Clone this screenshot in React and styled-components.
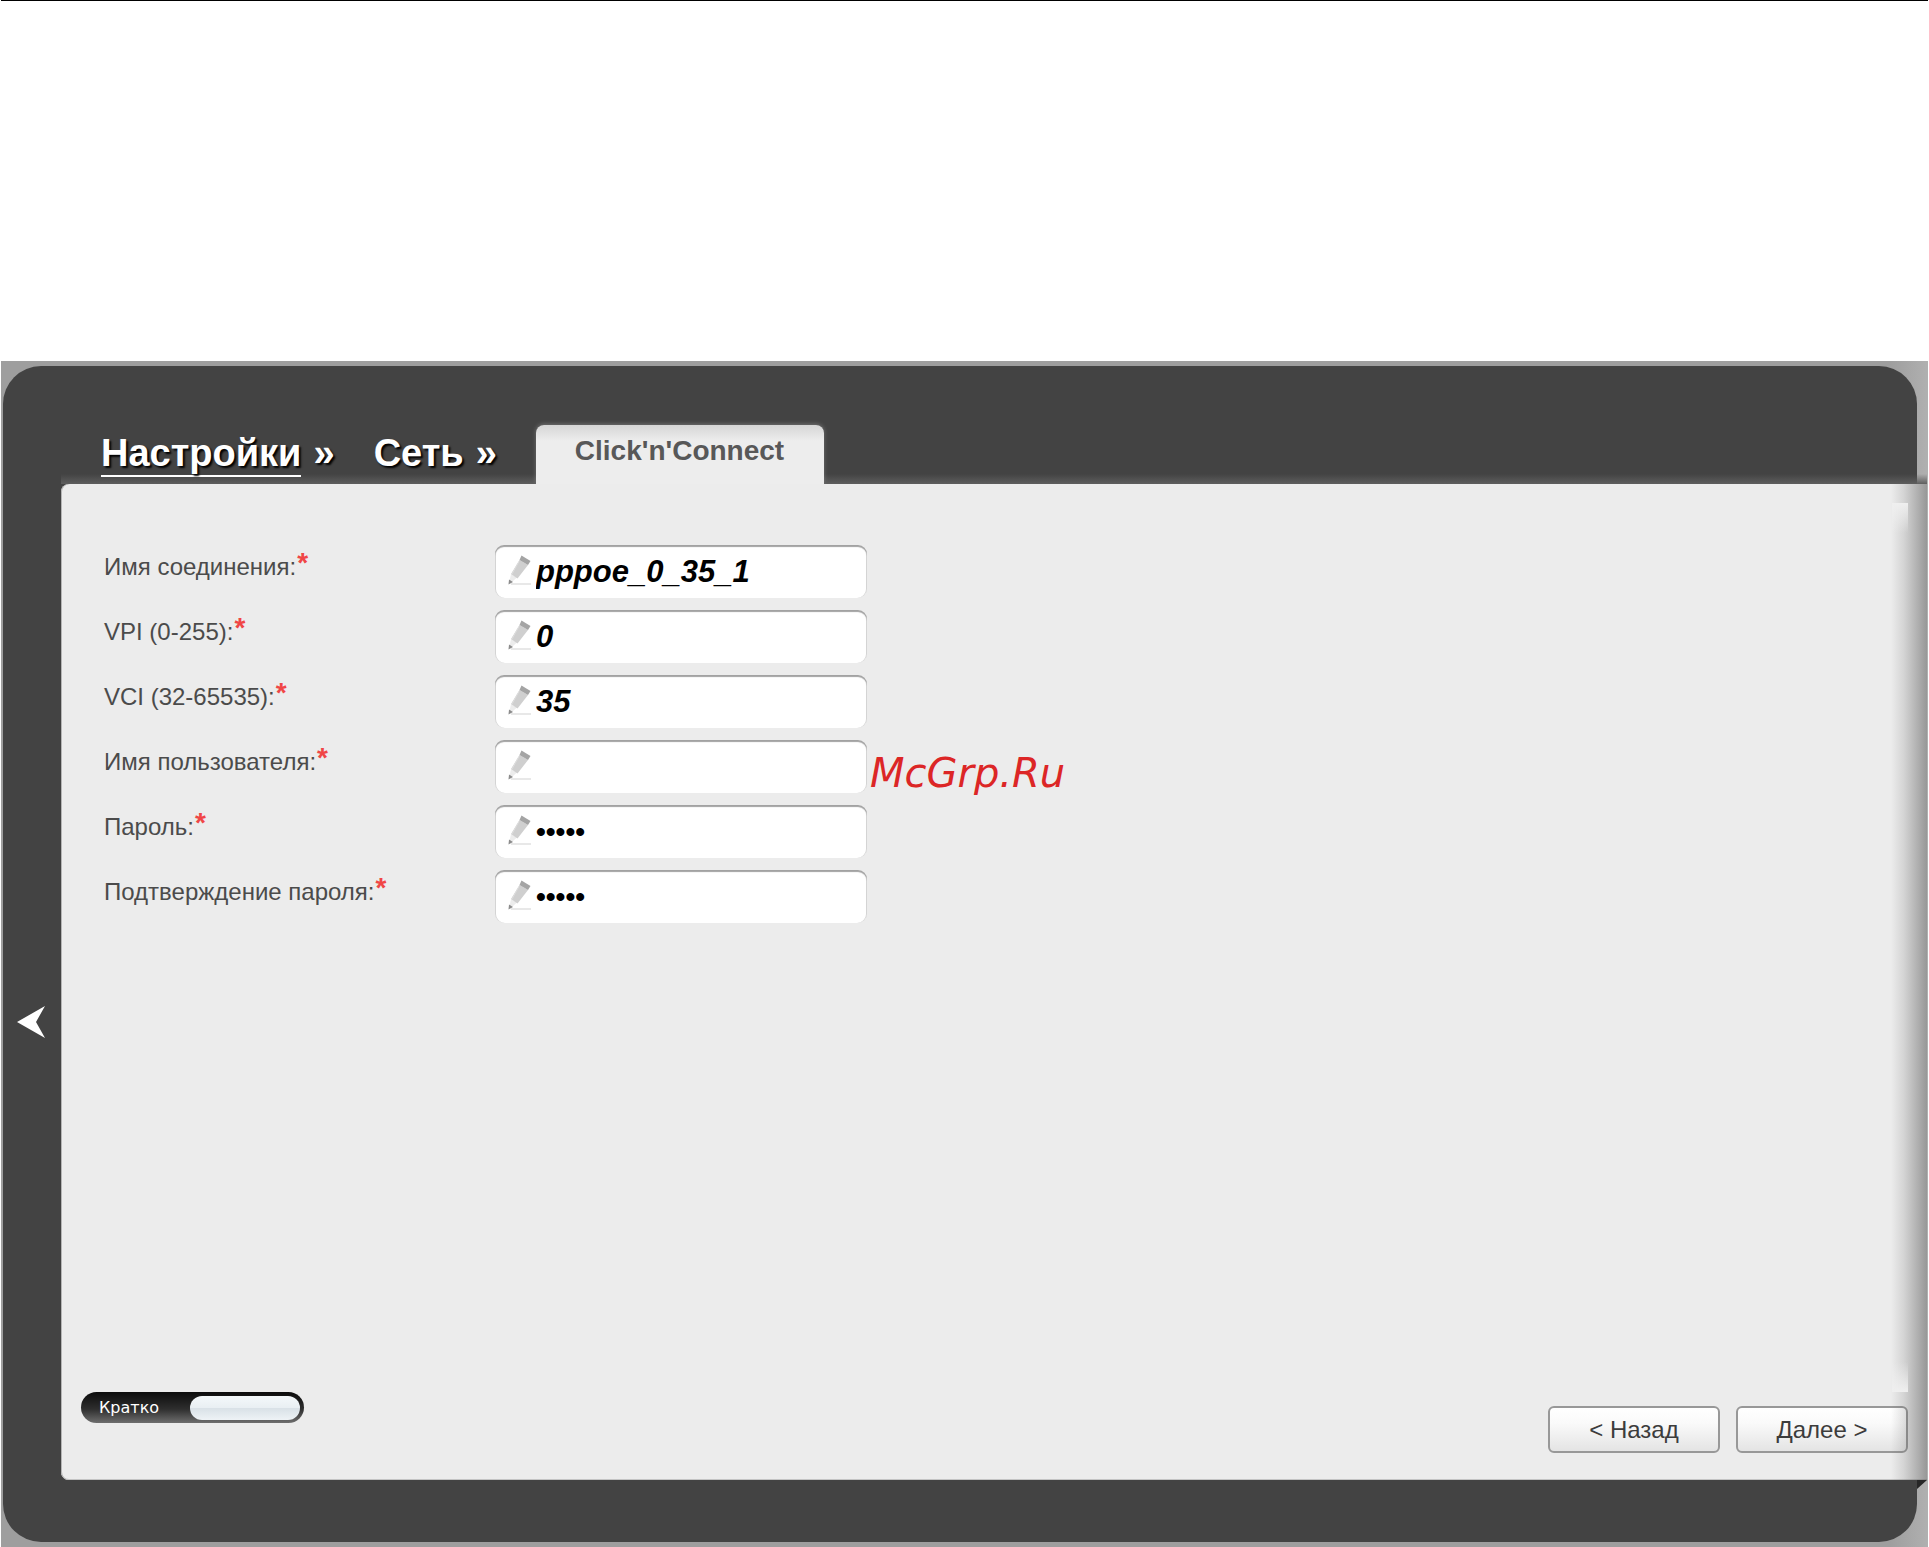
import React, { useState } from 'react';
import styled, { createGlobalStyle } from 'styled-components';

const color = {
  dark: '#434343',
  panel: '#ececec',
  frame: '#9e9e9e',
  text: '#4b4b4b',
  required: '#f04646',
  brand: '#dc2626',
};

const sans = "'Liberation Sans', Arial, sans-serif";

const GlobalStyle = createGlobalStyle`
  *, *::before, *::after {
    box-sizing: border-box;
  }

  body {
    margin: 0;
    background: #fff;
    font-family: ${sans};
  }
`;

const Page = styled.div`
  min-height: 100vh;
  display: flex;
  flex-direction: column;
  padding: 0 1px;
`;

const Rule = styled.hr`
  width: 100%;
  height: 1px;
  margin: 0 0 360px;
  border: 0;
  background: #000;
`;

const Frame = styled.div`
  flex: 1;
  display: flex;
  padding: 5px 11px 5px 2px;
  overflow: hidden;
  background: linear-gradient(to right, ${color.frame} 98%, #b0b0b0);
`;

const Shell = styled.div`
  flex: 1;
  display: flex;
  flex-direction: column;
  padding-bottom: 62px;
  border-radius: 38px;
  background: ${color.dark};
`;

const Header = styled.header`
  display: flex;
  align-items: flex-end;
  height: 118px;
  margin: 0 -10px 0 58px;
  padding-left: 40px;
  background: linear-gradient(to top, #5e5e5e, rgba(94, 94, 94, 0) 10px);
`;

const Crumbs = styled.nav`
  display: flex;
  gap: 39px;
  margin-bottom: 7px;
`;

const Crumb = styled.span`
  display: flex;
  gap: 12px;
  font-size: 38px;
  font-weight: bold;
  line-height: 44px;
  color: #fff;
  text-shadow: 2px 2px 2px #000;

  a {
    color: inherit;
    text-decoration: none;
    border-bottom: 2px solid ${(p) => (p.$underlined ? '#fff' : 'transparent')};
  }
`;

const Tab = styled.h1`
  margin: 0 0 0 39px;
  height: 59px;
  padding: 0 40px 0 39px;
  font-size: 28px;
  line-height: 52px;
  color: #585858;
  border-radius: 8px 8px 0 0;
  background: linear-gradient(#d6d6d6, #ededed 16px);
  box-shadow: 0 -1px 4px rgba(255, 255, 255, 0.25);
`;

const Body = styled.div`
  flex: 1;
  display: flex;
  margin-right: -10px;
`;

const Side = styled.aside`
  width: 58px;
  display: flex;
  align-items: center;
  padding: 80px 0 0 14px;
`;

const Collapse = styled.button`
  display: flex;
  padding: 0;
  border: 0;
  background: none;
  cursor: pointer;
`;

const Panel = styled.main`
  position: relative;
  flex: 1;
  display: flex;
  flex-direction: column;
  padding-top: 19px;
  border-radius: 8px 0 0 8px;
  background: ${color.panel};
  box-shadow: inset 1px 0 0 #b5b5b5, inset 0 -1px 0 #c4c4c4;

  /* shade on the right edge */
  &::before {
    content: '';
    position: absolute;
    z-index: 1;
    inset: 0 0 0 auto;
    width: 36px;
    pointer-events: none;
    background: linear-gradient(
      to right,
      rgba(90, 90, 90, 0),
      rgba(90, 90, 90, 0.16) 35%,
      rgba(90, 90, 90, 0.58)
    );
  }

  /* folded corner under the edge */
  &::after {
    content: '';
    position: absolute;
    top: 100%;
    right: 0;
    width: 10px;
    height: 9px;
    background: #262626;
    clip-path: polygon(0 0, 100% 0, 0 100%);
  }
`;

const Scroller = styled.div`
  position: relative;
  flex: 1;
  margin-right: 19px;
  padding: 42px 0 0 42px;

  &::before,
  &::after {
    content: '';
    position: absolute;
    z-index: 2;
    right: 0;
    width: 16px;
    height: 30px;
  }

  &::before {
    top: 0;
    background: linear-gradient(#efefef, rgba(239, 239, 239, 0));
  }

  &::after {
    bottom: 0;
    background: linear-gradient(rgba(239, 239, 239, 0), #efefef);
  }
`;

const Form = styled.form`
  display: flex;
  flex-direction: column;
  gap: 12px;
`;

const Row = styled.div`
  display: grid;
  grid-template-columns: 392px 372px;
  align-items: start;
`;

const Label = styled.label`
  display: flex;
  gap: 1px;
  padding-left: 1px;
  font-size: 24px;
  line-height: 44px;
  color: ${color.text};
`;

const Star = styled.span`
  font-size: 28px;
  font-weight: bold;
  line-height: 36px;
  color: ${color.required};
`;

const Field = styled.div`
  position: relative;
  display: flex;
  align-items: flex-start;
  height: 53px;
  padding: 10px 12px 0 13px;
  border-radius: 9px;
  background: #fff;
  box-shadow: inset 0 2px 1px #a2a2a2, inset 1px 0 0 #dadada,
    inset -1px 0 0 #dadada;
`;

const Input = styled.input`
  flex: 1;
  min-width: 0;
  height: 34px;
  margin-left: 4px;
  padding: 0;
  border: 0;
  outline: 0;
  background: none;
  font-family: ${sans};
  font-size: ${(p) => (p.type === 'password' ? 28 : 31)}px;
  font-weight: bold;
  font-style: ${(p) => (p.type === 'password' ? 'normal' : 'italic')};
  color: #000;
`;

const Brand = styled.span`
  position: absolute;
  top: 11px;
  left: 100%;
  margin-left: 3px;
  font: italic 40px/44px 'DejaVu Sans', sans-serif;
  color: ${color.brand};
`;

const Footer = styled.footer`
  display: flex;
  justify-content: space-between;
  align-items: flex-start;
  padding: 0 19px 27px 20px;
`;

const Switch = styled.button`
  display: flex;
  align-items: center;
  justify-content: space-between;
  width: 223px;
  height: 31px;
  padding: 0 4px 0 18px;
  border: 0;
  border-radius: 16px;
  background: linear-gradient(#0c0c0c, #2e2e2e 55%, #6e6e6e);
  font: 16px 'DejaVu Sans', sans-serif;
  color: #fff;
  cursor: pointer;
`;

const Knob = styled.span`
  width: 110px;
  height: 24px;
  border-radius: 12px;
  background: linear-gradient(#f4f8fa, #e9eff3 48%, #d9e1e7 52%, #eef3f6);
`;

const Actions = styled.div`
  display: flex;
  gap: 16px;
  padding-top: 14px;
`;

const Button = styled.button`
  width: 172px;
  height: 47px;
  padding: 0;
  border: 2px solid #989898;
  border-radius: 6px;
  background: linear-gradient(#fff, #fafafa 35%, #e4e4e4);
  font: 24px ${sans};
  color: #3c3c3c;
  cursor: pointer;
`;

const fields = [
  { id: 'name', label: 'Имя соединения:', value: 'pppoe_0_35_1' },
  { id: 'vpi', label: 'VPI (0-255):', value: '0' },
  { id: 'vci', label: 'VCI (32-65535):', value: '35' },
  { id: 'user', label: 'Имя пользователя:', value: '', brand: 'McGrp.Ru' },
  { id: 'password', label: 'Пароль:', value: '12345', type: 'password' },
  {
    id: 'confirm',
    label: 'Подтверждение пароля:',
    value: '12345',
    type: 'password',
  },
];

function Pencil() {
  return (
    <svg width='24' height='31' viewBox='0 0 24 31' aria-hidden='true'>
      <path d='M3 29h20' stroke='#e8e8e8' strokeWidth='2' />
      <path d='M3 19 9 22.500 5 26 1 29z' fill='#ececec' />
      <path d='M11.500 5 20 10 9.500 23.500 3 19z' fill='#cfcfcf' />
      <path d='M11 6.500 4 19' stroke='#dedede' strokeWidth='1' />
      <path d='M13.500 .5 22.500 6 20 10 11.500 5z' fill='#a4a4a4' />
      <path d='M1 24.500 5 27 .5 29.500z' fill='#8c8c8c' />
    </svg>
  );
}

function FieldRow({ id, label, value, type = 'text', brand }) {
  return (
    <Row>
      <Label htmlFor={id}>
        {label}
        <Star>*</Star>
      </Label>
      <Field>
        <Pencil />
        <Input id={id} type={type} defaultValue={value} autoComplete='off' />
        {brand && <Brand>{brand}</Brand>}
      </Field>
    </Row>
  );
}

export default function App() {
  const [brief, setBrief] = useState(true);

  return (
    <>
      <GlobalStyle />
      <Page>
        <Rule />
        <Frame>
          <Shell>
            <Header>
              <Crumbs>
                <Crumb $underlined>
                  <a href='#settings'>Настройки</a>
                  <span>»</span>
                </Crumb>
                <Crumb>
                  <a href='#network'>Сеть</a>
                  <span>»</span>
                </Crumb>
              </Crumbs>
              <Tab>Click'n'Connect</Tab>
            </Header>
            <Body>
              <Side>
                <Collapse type='button' aria-label='Свернуть'>
                  <svg width='30' height='36' viewBox='0 0 30 36'>
                    <path d='M0 18 28 2 19 18 28 34z' fill='#fff' />
                  </svg>
                </Collapse>
              </Side>
              <Panel>
                <Scroller>
                  <Form id='connection' onSubmit={(e) => e.preventDefault()}>
                    {fields.map((field) => (
                      <FieldRow key={field.id} {...field} />
                    ))}
                  </Form>
                </Scroller>
                <Footer>
                  <Switch
                    type='button'
                    role='switch'
                    aria-checked={brief}
                    onClick={() => setBrief(!brief)}
                  >
                    Кратко
                    <Knob />
                  </Switch>
                  <Actions>
                    <Button type='button'>&lt; Назад</Button>
                    <Button type='submit' form='connection'>
                      Далее &gt;
                    </Button>
                  </Actions>
                </Footer>
              </Panel>
            </Body>
          </Shell>
        </Frame>
      </Page>
    </>
  );
}
